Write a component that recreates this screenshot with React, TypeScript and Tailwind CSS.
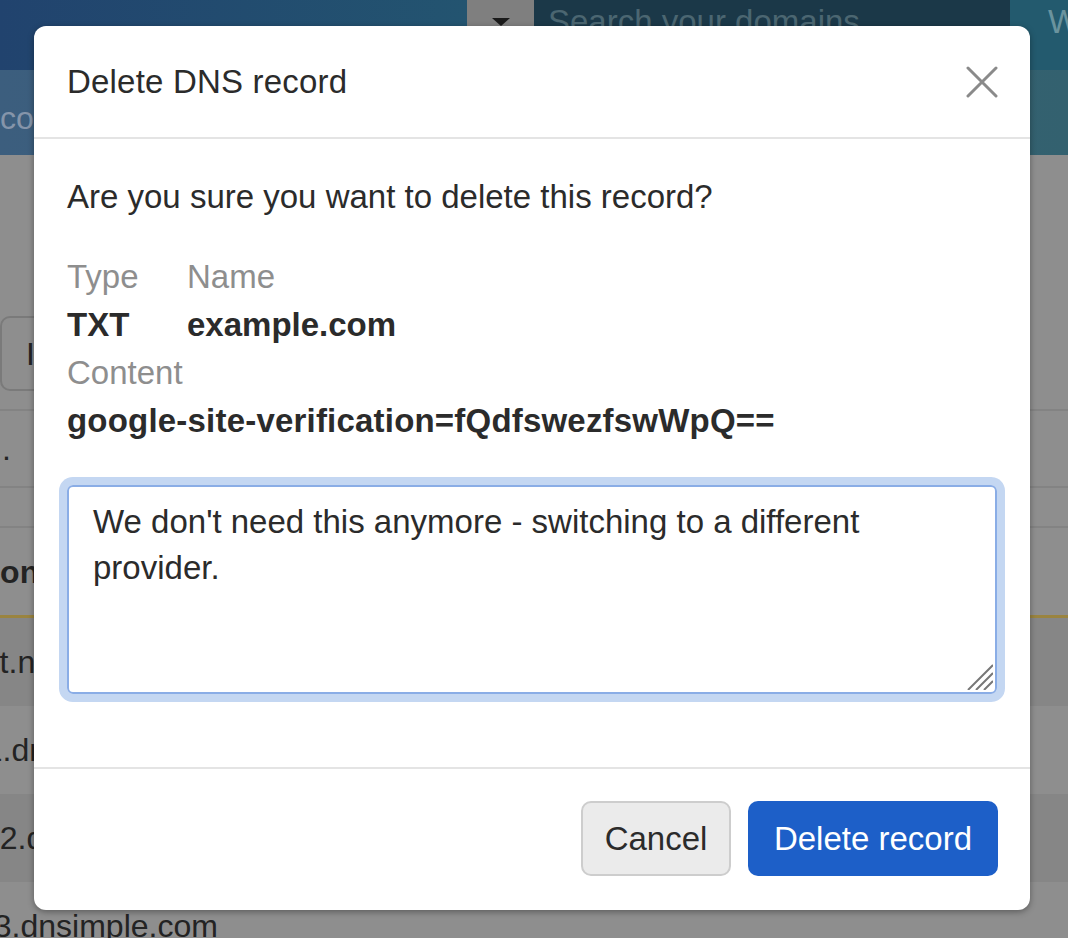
import React from "react";

const rows = [
    { text: "host.net", ml: "ml-[-52px]", dark: true },
    { text: "ns1.dnsimple.com", ml: "ml-[-49px]", dark: false },
    { text: "ns2.dnsimple.com", ml: "ml-[-34px]", dark: true },
    { text: "ns3.dnsimple.com", ml: "ml-[-40px]", dark: false },
];

function Backdrop() {
    return (
        <div>
            {/* top nav */}
            <div className="h-[70px] flex">
                <div className="flex-1 bg-gradient-to-r from-[#21436e] to-[#235470]" />
                <div className="w-[67px] bg-[#7f7f7f] flex justify-center pt-[18px]">
                    <svg width="18" height="8" viewBox="0 0 18 8">
                        <polygon points="0,0 18,0 9,8" fill="#1a1a1a" />
                    </svg>
                </div>
                <div className="w-[476px] bg-[#1b3848] pl-[14px] pt-[3px]">
                    <span className="text-[33px] leading-[38px] text-[#4b6671] whitespace-nowrap">Search your domains</span>
                </div>
                <div className="w-[58px] bg-[#235a6e] pl-[38px] pt-[3px] overflow-hidden">
                    <span className="text-[33px] leading-[38px] text-[#6a939e]">W</span>
                </div>
            </div>
            {/* sub nav */}
            <div className="h-[85px] bg-gradient-to-r from-[#3c5e7e] to-[#33616f] pt-[28px]">
                <span className="text-[32px] leading-[40px] text-[#8595aa]">com</span>
            </div>
            {/* page */}
            <div className="text-[#232323] text-[32px] whitespace-nowrap">
                <div className="pt-[161px]">
                    <div className="w-[160px] h-[75px] rounded-[10px] border-2 border-[#7a7a7a] flex items-center pl-[24px]">
                        Import
                    </div>
                </div>
                <div className="mt-[18px] border-t-2 border-[#838383] h-[79px] border-b-2 flex items-center pl-[2px]">
                    .
                </div>
                <div className="h-[40px] border-b-2 border-[#838383]" />
                <div className="h-[90px] flex items-center font-bold border-b-[3px] border-[#9a8440]">
                    <span className="ml-[-23px]">Content</span>
                </div>
                {rows.map((r) => (
                    <div
                        key={r.text}
                        className={`h-[88px] flex items-center ${r.dark ? "bg-[#868686]" : "bg-[#8e8e8e]"}`}
                    >
                        <span className={r.ml}>{r.text}</span>
                    </div>
                ))}
            </div>
        </div>
    );
}

export default function App() {
    return (
        <div className="relative w-[1068px] h-[938px] overflow-hidden bg-[#8e8e8e] font-['Liberation_Sans',Arial,sans-serif]">
            <Backdrop />

            {/* Modal */}
            <div className="absolute left-[34px] top-[26px] w-[996px] bg-white rounded-[12px] shadow-[0_2px_6px_rgba(0,0,0,0.35)] text-[#2b2b2b] text-[33px]">
                <div className="h-[113px] flex items-center justify-between pl-[33px] pr-[32px] border-b-2 border-[#e4e4e4]">
                    <h2 className="font-normal tracking-[0.2px]">Delete DNS record</h2>
                    <svg width="32" height="32" viewBox="0 0 32 32" className="text-[#8a8a8a]">
                        <path d="M2 2 L30 30 M30 2 L2 30" stroke="currentColor" strokeWidth="3" strokeLinecap="round" />
                    </svg>
                </div>

                <div className="px-[33px] pt-[34px] pb-[73px]">
                    <p className="leading-[48px] mb-[32px]">Are you sure you want to delete this record?</p>
                    <div className="grid grid-cols-[120px_1fr] leading-[48px]">
                        <span className="text-[#8e8e8e]">Type</span>
                        <span className="text-[#8e8e8e]">Name</span>
                        <span className="font-bold">TXT</span>
                        <span className="font-bold">example.com</span>
                    </div>
                    <div className="leading-[48px] text-[#8e8e8e]">Content</div>
                    <div className="leading-[48px] font-bold tracking-[0.2px]">google-site-verification=fQdfswezfswWpQ==</div>

                    <div className="relative mt-[40px]">
                        <textarea
                            className="block w-full h-[209px] resize-none border-2 border-[#8aade6] rounded-[6px] shadow-[0_0_0_8px_#c4d7f2] outline-none pt-[12px] px-[24px] text-[33px] leading-[46px] text-[#2b2b2b]"
                            defaultValue="We don't need this anymore - switching to a different provider."
                        />
                        <svg width="26" height="26" viewBox="0 0 26 26" className="absolute right-[4px] bottom-[4px] text-[#777]">
                            <path d="M1 26 L26 1 M9 26 L26 9 M17 26 L26 17" stroke="currentColor" strokeWidth="2" />
                        </svg>
                    </div>
                </div>

                <div className="border-t-2 border-[#e4e4e4] pt-[32px] pb-[34px] pr-[32px] flex justify-end gap-[17px]">
                    <button className="w-[150px] h-[75px] rounded-[10px] border-2 border-[#cdcdcd] bg-[#ebebeb] text-[#2b2b2b]">
                        Cancel
                    </button>
                    <button className="w-[250px] h-[75px] rounded-[10px] bg-[#1d5fc8] text-white">
                        Delete record
                    </button>
                </div>
            </div>
        </div>
    );
}
